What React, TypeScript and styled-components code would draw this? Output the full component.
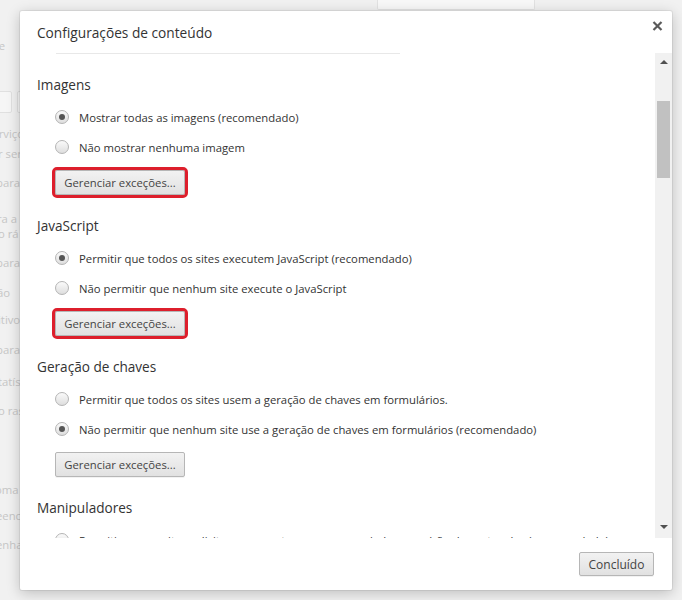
import React from "react";
import styled, { createGlobalStyle } from "styled-components";

const Global = createGlobalStyle`
  html, body { margin: 0; padding: 0; background: #f1f1f1; }
  body { font-family: "Open Sans", "Noto Sans", sans-serif; -webkit-font-smoothing: antialiased; }
  * { box-sizing: border-box; }
`;

const Stage = styled.div`
  position: relative;
  width: 682px;
  height: 600px;
  overflow: hidden;
  background: #f1f1f1;
`;

const Backdrop = styled.div`
  display: flex;
  flex-direction: column;
  width: 100%;
  height: 100%;
`;

const TopBar = styled.div`
  display: flex;
  height: 11px;
  padding-left: 377px;
`;

const SearchBox = styled.div`
  width: 158px;
  height: 10px;
  border: 1px solid #e2e2e2;
  border-top: none;
  background: #f8f8f8;
  border-radius: 0 0 2px 2px;
`;

const BgText = styled.div<{ $gap: number; $shift?: number }>`
  margin-top: ${(p) => p.$gap}px;
  margin-left: ${(p) => p.$shift ?? 0}px;
  height: 15px;
  line-height: 15px;
  font-size: 11.3px;
  color: #c6c6c6;
  white-space: nowrap;
`;

const BgButtons = styled.div<{ $gap: number }>`
  display: flex;
  gap: 5px;
  margin-top: ${(p) => p.$gap}px;
  margin-left: -20px;
`;

const BgButton = styled.div`
  width: 32px;
  height: 22px;
  border: 1px solid #e0e0e0;
  border-radius: 2px;
  background: #f6f6f6;
`;

const Dialog = styled.div`
  position: absolute;
  left: 20px;
  top: 11px;
  width: 652px;
  height: 579px;
  background: #fff;
  border-radius: 2px;
  box-shadow: 0 3px 14px rgba(0, 0, 0, 0.22), 0 0 0 1px rgba(0, 0, 0, 0.06);
  display: flex;
  flex-direction: column;
  overflow: hidden;
`;

const Header = styled.div`
  display: flex;
  justify-content: space-between;
  align-items: flex-start;
  height: 42px;
  padding: 0 9px 0 17px;
`;

const Title = styled.h1`
  margin: 11px 0 0;
  font-size: 13.7px;
  font-weight: 400;
  line-height: 22px;
  color: #333;
`;

const CloseButton = styled.button`
  border: none;
  background: none;
  padding: 0;
  margin-top: 10px;
  width: 11px;
  height: 10px;
  display: flex;
  cursor: pointer;
`;

const Body = styled.div`
  display: flex;
  height: 485px;
`;

const ContentColumn = styled.div`
  flex: 1;
  display: flex;
  flex-direction: column;
  overflow: hidden;
`;

const Rule = styled.div`
  height: 1px;
  width: 344px;
  margin-left: 36px;
  background: #e8e8e8;
  flex-shrink: 0;
`;

const Content = styled.div`
  padding: 21px 0 0 17px;
  display: flex;
  flex-direction: column;
`;

const Section = styled.section`
  display: flex;
  flex-direction: column;
  align-items: flex-start;
  margin-bottom: 21px;
`;

const SectionTitle = styled.h2`
  margin: 0 0 7px;
  font-size: 13.6px;
  font-weight: 400;
  line-height: 20px;
  color: #333;
`;

const RadioRow = styled.label`
  display: flex;
  align-items: center;
  height: 30px;
  padding-left: 18px;
  gap: 10px;
  font-size: 11.3px;
  color: #333;
  white-space: nowrap;
`;

const RadioCircle = styled.span<{ $checked?: boolean }>`
  width: 14px;
  height: 14px;
  border-radius: 50%;
  border: 1px solid #b4b4b4;
  background: linear-gradient(#fafafa, #dedede);
  display: flex;
  align-items: center;
  justify-content: center;
  flex-shrink: 0;
  &::after {
    content: "";
    display: ${(p) => (p.$checked ? "block" : "none")};
    width: 6px;
    height: 6px;
    border-radius: 50%;
    background: #555;
  }
`;

const Button = styled.button<{ $highlight?: boolean }>`
  font-family: inherit;
  font-size: 11.3px;
  color: #444;
  height: 25px;
  padding: 0;
  white-space: nowrap;
  border: 1px solid #b6b6b6;
  border-radius: 2px;
  background: linear-gradient(#f2f2f2, #e1e1e1);
  box-shadow: 0 1px 0 rgba(0, 0, 0, 0.05);
  outline: ${(p) => (p.$highlight ? "3px solid #dd1f2c" : "none")};
`;

const ManageButton = styled(Button)`
  margin: 8px 0 0 18px;
  width: 130px;
`;

const Scrollbar = styled.div`
  width: 17px;
  background: #f1f1f1;
  display: flex;
  flex-direction: column;
  align-items: center;
`;

const Arrow = styled.div<{ $down?: boolean }>`
  width: 0;
  height: 0;
  border-left: 4px solid transparent;
  border-right: 4px solid transparent;
  ${(p) =>
    p.$down
      ? "border-top: 4px solid #505050; margin-top: auto; margin-bottom: 9px;"
      : "border-bottom: 4px solid #505050; margin-top: 7px;"}
`;

const Thumb = styled.div`
  width: 13px;
  height: 77px;
  margin-top: 37px;
  background: #c1c1c1;
`;

const Footer = styled.div`
  display: flex;
  justify-content: flex-end;
  padding: 14px 18px 0 0;
  height: 52px;
`;

const DoneButton = styled(Button)`
  width: 75px;
  height: 24px;
  font-size: 12px;
`;

type Option = { label: string; checked?: boolean };
type Group = { title: string; options: Option[]; highlight?: boolean; noButton?: boolean };

const groups: Group[] = [
  {
    title: "Imagens",
    highlight: true,
    options: [
      { label: "Mostrar todas as imagens (recomendado)", checked: true },
      { label: "Não mostrar nenhuma imagem" },
    ],
  },
  {
    title: "JavaScript",
    highlight: true,
    options: [
      { label: "Permitir que todos os sites executem JavaScript (recomendado)", checked: true },
      { label: "Não permitir que nenhum site execute o JavaScript" },
    ],
  },
  {
    title: "Geração de chaves",
    options: [
      { label: "Permitir que todos os sites usem a geração de chaves em formulários." },
      { label: "Não permitir que nenhum site use a geração de chaves em formulários (recomendado)", checked: true },
    ],
  },
  {
    title: "Manipuladores",
    noButton: true,
    options: [
      { label: "Permitir que os sites solicitem para se tornarem gerenciadores padrão de protocolos (recomendado)", checked: false },
    ],
  },
];

const bgLines: { text: string; gap: number; shift?: number }[] = [
  { text: "Negação e", gap: 27, shift: -50 },
];

const bgLines2: { text: string; gap: number; shift?: number }[] = [
  { text: "serviço", gap: 13, shift: -13 },
  { text: "r ser", gap: 5, shift: -2 },
  { text: "para", gap: 14, shift: -4 },
  { text: "ra a", gap: 21, shift: -3 },
  { text: "o rá", gap: 0, shift: -2 },
  { text: "para", gap: 14, shift: -4 },
  { text: "ão", gap: 15, shift: -3 },
  { text: "itivo", gap: 12, shift: -2 },
  { text: "para", gap: 15, shift: -4 },
  { text: "tatís", gap: 17, shift: -2 },
  { text: "o ras", gap: 14, shift: -2 },
  { text: "oma", gap: 64, shift: -5 },
  { text: "eenc", gap: 11, shift: -4 },
  { text: "enha", gap: 14, shift: -4 },
];

export default function App() {
  return (
    <>
      <Global />
      <Stage>
        <Backdrop>
          <TopBar>
            <SearchBox />
          </TopBar>
          {bgLines.map((l, i) => (
            <BgText key={i} $gap={l.gap} $shift={l.shift}>
              {l.text}
            </BgText>
          ))}
          <BgButtons $gap={38}>
            <BgButton />
            <BgButton />
          </BgButtons>
          {bgLines2.map((l, i) => (
            <BgText key={i} $gap={l.gap} $shift={l.shift}>
              {l.text}
            </BgText>
          ))}
        </Backdrop>
        <Dialog>
          <Header>
            <Title>Configurações de conteúdo</Title>
            <CloseButton aria-label="Fechar">
              <svg width="11" height="10" viewBox="0 0 11 10">
                <path d="M1.5 1 L9.5 9 M9.5 1 L1.5 9" stroke="#5a5a5a" strokeWidth="2.2" strokeLinecap="butt" />
              </svg>
            </CloseButton>
          </Header>
          <Body>
            <ContentColumn>
              <Rule />
              <Content>
                {groups.map((g) => (
                  <Section key={g.title}>
                    <SectionTitle>{g.title}</SectionTitle>
                    {g.options.map((o) => (
                      <RadioRow key={o.label}>
                        <RadioCircle $checked={o.checked} />
                        {o.label}
                      </RadioRow>
                    ))}
                    {!g.noButton && (
                      <ManageButton $highlight={g.highlight}>Gerenciar exceções...</ManageButton>
                    )}
                  </Section>
                ))}
              </Content>
            </ContentColumn>
            <Scrollbar>
              <Arrow />
              <Thumb />
              <Arrow $down />
            </Scrollbar>
          </Body>
          <Footer>
            <DoneButton>Concluído</DoneButton>
          </Footer>
        </Dialog>
      </Stage>
    </>
  );
}
